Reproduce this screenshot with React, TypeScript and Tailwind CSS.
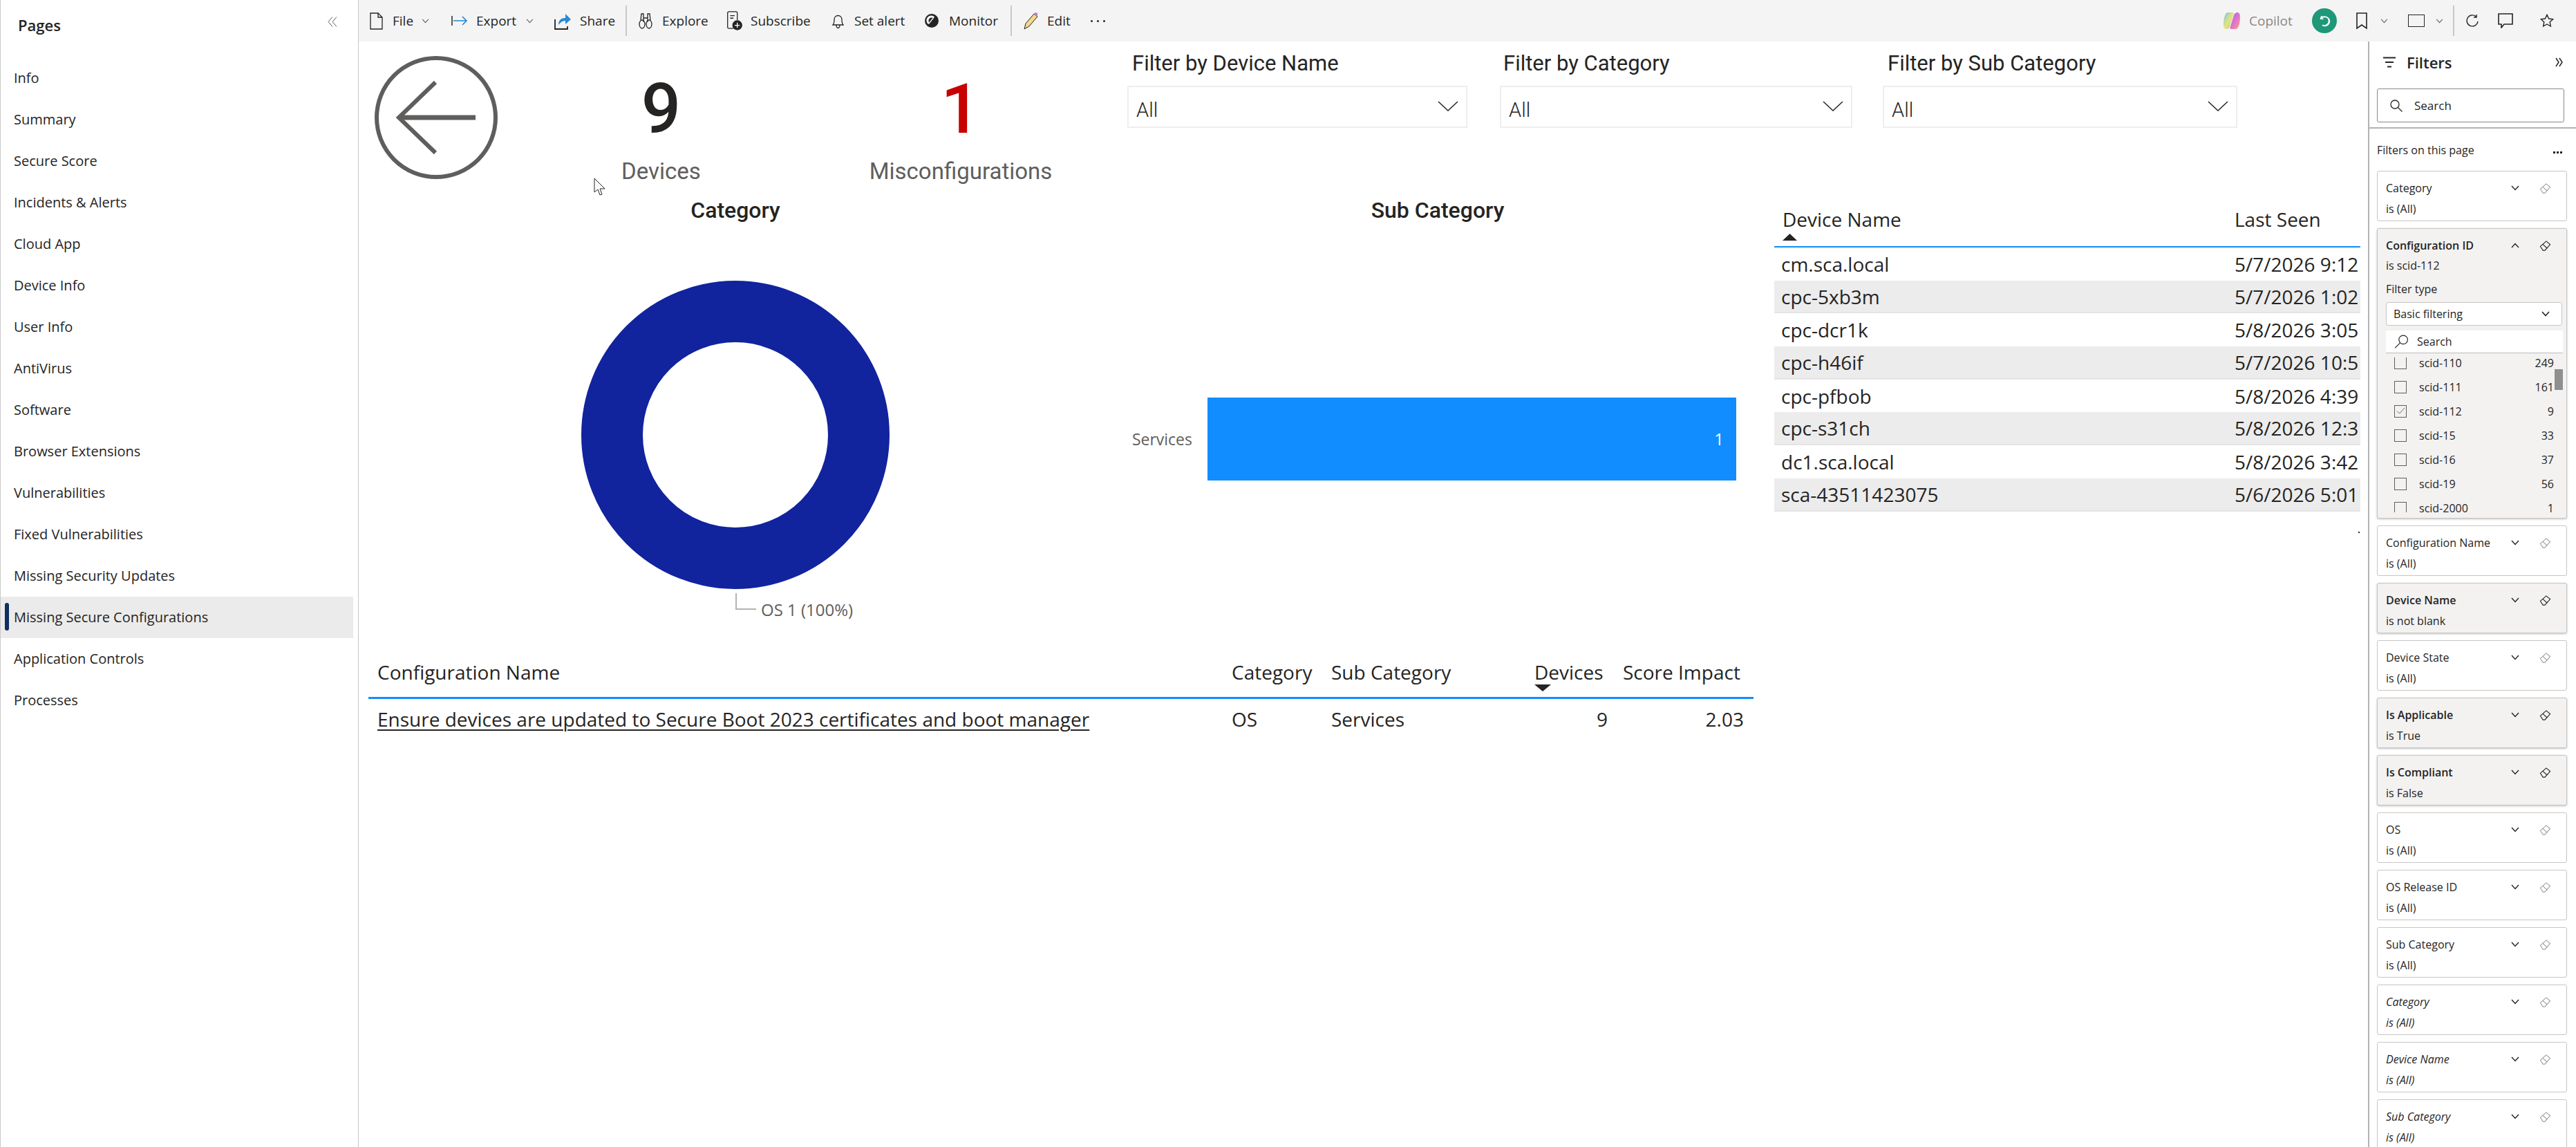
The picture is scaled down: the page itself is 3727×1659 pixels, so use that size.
import React from "react";

const pages = ["Info","Summary","Secure Score","Incidents & Alerts","Cloud App","Device Info","User Info","AntiVirus","Software","Browser Extensions","Vulnerabilities","Fixed Vulnerabilities","Missing Security Updates","Missing Secure Configurations","Application Controls","Processes"];

const Chev = ({ className = "", up = false, color = "#252423", w = 1.4 }: { className?: string; up?: boolean; color?: string; w?: number }) => (
  <svg viewBox="0 0 12 8" className={className} fill="none" stroke={color} strokeWidth={w}>
    <path d={up ? "M1 7l5-5.5L11 7" : "M1 1l5 5.5L11 1"} />
  </svg>
);

const Eraser = ({ color }: { color: string }) => (
  <svg viewBox="0 0 18 18" className="w-[17px] h-[17px]" fill="none" stroke={color} strokeWidth="1.2">
    <path d="M1.5 10L10.5 2l6 5-8 9H5.5z" />
    <path d="M5 6.5L12 13" />
  </svg>
);

function Card({ title, sub, variant = "normal" }: { title: string; sub: string; variant?: "normal" | "active" | "italic" }) {
  const active = variant === "active";
  return (
    <div className={active ? "h-[73px] mb-[10px] rounded-[3px] border border-[#c8c6c4] bg-[#f3f2f1] shadow-[0_1px_3px_rgba(0,0,0,0.25)] pl-[12px] pt-[11px] shrink-0" : "h-[73px] mb-[10px] rounded-[3px] border border-[#c8c6c4] bg-white pl-[12px] pt-[11px] shrink-0"}>
      <div className={variant === "italic" ? "flex items-center h-[26px] italic" : "flex items-center h-[26px]"}>
        <span className={active ? "w-[180px] text-[16px] font-semibold text-[#252423] whitespace-nowrap" : "w-[180px] text-[16px] text-[#252423] whitespace-nowrap"}>{title}</span>
        <Chev className="w-[12px] h-[8px] ml-[1px]" />
        <span className="ml-[29px]"><Eraser color={active ? "#252423" : "#a19f9d"} /></span>
      </div>
      <div className={variant === "italic" ? "h-[34px] leading-[34px] text-[16px] text-[#252423] italic" : "h-[34px] leading-[34px] text-[16px] text-[#252423]"}>{sub}</div>
    </div>
  );
}

const listRows: [string, string, boolean][] = [
  ["scid-110","249",false],["scid-111","161",false],["scid-112","9",true],["scid-15","33",false],["scid-16","37",false],["scid-19","56",false],["scid-2000","1",false],
];

const devices: [string, string][] = [
  ["cm.sca.local","5/7/2026 9:12"],["cpc-5xb3m","5/7/2026 1:02"],["cpc-dcr1k","5/8/2026 3:05"],["cpc-h46if","5/7/2026 10:5"],
  ["cpc-pfbob","5/8/2026 4:39"],["cpc-s31ch","5/8/2026 12:3"],["dc1.sca.local","5/8/2026 3:42"],["sca-43511423075","5/6/2026 5:01"],
];

function Slicer({ title, titleClass, boxClass }: { title: string; titleClass: string; boxClass: string }) {
  return (
    <div className={boxClass}>
      <div className={titleClass}>{title}</div>
      <div className="mt-[12px] h-[61px] border-2 border-[#eeeeee] flex items-center justify-between pl-[11px] pr-[11px] pt-[10px]">
        <span className="text-[29px] text-[#252423] font-['Roboto',sans-serif] font-light">All</span>
        <svg viewBox="0 0 30 15" className="w-[30px] h-[15px] -mt-[13px]" fill="none" stroke="#252423" strokeWidth="1.5"><path d="M1 1l14 13L29 1" /></svg>
      </div>
    </div>
  );
}

export default function App() {
  return (
    <div className="relative flex w-[3727px] h-[1659px] overflow-hidden bg-white font-['Open_Sans',sans-serif] text-[#252423]">
      {/* pages */}
      <aside className="w-[519px] shrink-0 h-full border-l border-l-[#c8c8c8] border-r border-r-[#c8c8c8]">
        <div className="h-[72px] flex items-center justify-between pl-[25px] pr-[30px]">
          <span className="text-[22px] font-semibold text-[#252423]">Pages</span>
          <svg viewBox="0 0 14 15" className="w-[14px] h-[15px] -mt-[10px]" fill="none" stroke="#605e5c" strokeWidth="1"><path d="M7 .5L1 7.5l6 7M13 .5L7 7.5l6 7" /></svg>
        </div>
        <nav className="mt-[11px]">
          {pages.map((p, i) => (
            <div key={p} className={i === 13 ? "relative h-[60px] w-[510px] bg-[#ebebeb] flex items-center pl-[19px] text-[20px] font-medium whitespace-nowrap" : "h-[60px] flex items-center pl-[19px] text-[20px] text-[#252423] whitespace-nowrap"}>
              {i === 13 && <span className="absolute left-[6px] top-[9px] w-[6px] h-[40px] rounded-[3px] bg-[#0f2f5f]" />}
              {p}
            </div>
          ))}
        </nav>
      </aside>

      <div className="flex-1 min-w-0 flex flex-col">
        {/* toolbar */}
        <header className="h-[60px] shrink-0 bg-[#f4f4f4] flex items-center text-[19px] text-[#252423] pl-[16px]">
          <div className="w-[118px] flex items-center">
            <svg viewBox="0 0 19 25" className="w-[19px] h-[25px]" fill="none" stroke="#252423" strokeWidth="1.3"><path d="M1 1h11l6 6v17H1zM12 1v6h6" /></svg>
            <span className="ml-[14px]">File</span>
            <Chev className="w-[11px] h-[7px] ml-[12px]" color="#605e5c" w={1.2} />
          </div>
          <div className="w-[149px] flex items-center">
            <svg viewBox="0 0 24 16" className="w-[24px] h-[16px]" fill="none" strokeWidth="1.5"><path d="M1 1v14" stroke="#252423" /><path d="M3 8h19M16 2l6 6-6 6" stroke="#1d86d0" /></svg>
            <span className="ml-[12px]">Export</span>
            <Chev className="w-[11px] h-[7px] ml-[14px]" color="#605e5c" w={1.2} />
          </div>
          <div className="w-[103px] flex items-center">
            <svg viewBox="0 0 24 26" className="w-[24px] h-[26px]" fill="none"><path d="M1 11v14h18v-4" stroke="#252423" strokeWidth="1.8" /><path d="M6 19c0-7 4-10 10-10V3l8 8-8 7v-5c-4 0-7 2-10 6z" fill="#2a8ad4" /></svg>
            <span className="ml-[13px]">Share</span>
          </div>
          <div className="w-[2px] h-[44px] bg-[#c8c8c8]" />
          <div className="w-[127px] ml-[17px] flex items-center">
            <svg viewBox="0 0 20 24" className="w-[20px] h-[24px]" fill="none" stroke="#252423" strokeWidth="1.3"><ellipse cx="5" cy="17" rx="4" ry="6" /><ellipse cx="15" cy="17" rx="4" ry="6" /><path d="M3 11l1-9h3v12M17 11l-1-9h-3v12M7 8h6" /></svg>
            <span className="ml-[14px]">Explore</span>
          </div>
          <div className="w-[153px] flex items-center">
            <svg viewBox="0 0 23 30" className="w-[23px] h-[28px]" fill="none" stroke="#252423" strokeWidth="1.4"><path d="M10 27H3a2 2 0 0 1-2-2V3a2 2 0 0 1 2-2h11a2 2 0 0 1 2 2v11M5 7h7M5 11h5" /><circle cx="16" cy="22" r="7" fill="#252423" /><path d="M16 18v8M12 22h8" stroke="#fff" /></svg>
            <span className="ml-[12px]">Subscribe</span>
          </div>
          <div className="w-[134px] flex items-center">
            <svg viewBox="0 0 17 24" className="w-[17px] h-[24px]" fill="none" stroke="#252423" strokeWidth="1.3"><path d="M1 18c2-2 2-4 2-8a5.500 5.500 0 0 1 11 0c0 4 0 6 2 8zM6 18c0 6 5 6 5 0" /></svg>
            <span className="ml-[15px]">Set alert</span>
          </div>
          <div className="w-[124px] flex items-center">
            <svg viewBox="0 0 20 20" className="w-[20px] h-[20px]" fill="#252423"><circle cx="10" cy="10" r="10" /><path d="M5 15A7 7 0 0 1 14 4L8 13z" fill="#f4f4f4" /><circle cx="10" cy="10" r="4.500" fill="#252423" /><path d="M6 14l7-9" stroke="#f4f4f4" strokeWidth="1.3" /></svg>
            <span className="ml-[15px]">Monitor</span>
          </div>
          <div className="w-[2px] h-[44px] bg-[#c8c8c8]" />
          <div className="w-[99px] ml-[15px] flex items-center">
            <svg viewBox="0 0 23 26" className="w-[23px] h-[26px]"><path d="M5 17L17 3l5 4-12 14-7 4z" fill="#f6d78a" stroke="#252423" strokeWidth="1" /><path d="M17 3l2-2 3 1 0 3-1 2z" fill="#c27ac7" /></svg>
            <span className="ml-[13px]">Edit</span>
          </div>
          <span className="flex gap-[6px]"><i className="w-[3px] h-[3px] bg-[#252423] rounded-full" /><i className="w-[3px] h-[3px] bg-[#252423] rounded-full" /><i className="w-[3px] h-[3px] bg-[#252423] rounded-full" /></span>

          <div className="ml-auto flex items-center">
            <svg viewBox="0 0 24 26" className="w-[24px] h-[26px]">
              <defs>
                <linearGradient id="cpa" x1="0" y1="0" x2="1" y2="1"><stop offset="0" stopColor="#6cc5f0" /><stop offset="0.5" stopColor="#e8e27a" /><stop offset="1" stopColor="#8fd89a" /></linearGradient>
                <linearGradient id="cpb" x1="0" y1="0" x2="1" y2="1"><stop offset="0" stopColor="#7a7af0" /><stop offset="0.5" stopColor="#e36fd0" /><stop offset="1" stopColor="#f6a77a" /></linearGradient>
              </defs>
              <path d="M6 1h7c2 0 2 2 1 4l-5 16c-1 3-3 4-5 4-3 0-4-3-4-7 0-7 2-17 6-17z" fill="url(#cpa)" />
              <path d="M18 25h-7c-2 0-2-2-1-4l5-16c1-3 3-4 5-4 3 0 4 3 4 7 0 7-2 17-6 17z" fill="url(#cpb)" />
            </svg>
            <span className="ml-[13px] text-[#8a8886] w-[67px]">Copilot</span>
            <span className="ml-[24px] w-[36px] h-[36px] rounded-full bg-[#1f9779] flex items-center justify-center">
              <svg viewBox="0 0 18 18" className="w-[18px] h-[18px]" fill="none" stroke="#fff" strokeWidth="1.6"><path d="M5 2l-1.500 4 4 .5M3.800 6A7 6.500 0 1 1 6 15.500 7 6.500 0 0 0 15.500 9c0-3.500-3-6-6.500-6-2 0-4 1-5.200 3z" /></svg>
            </span>
            <svg viewBox="0 0 16 25" className="ml-[28px] w-[16px] h-[25px]" fill="none" stroke="#252423" strokeWidth="1.6"><path d="M1 1h14v22l-7-5-7 5z" /></svg>
            <Chev className="ml-[19px] w-[11px] h-[7px]" color="#605e5c" w={1.2} />
            <span className="ml-[29px] w-[24px] h-[18px] border-[1.5px] border-[#252423]" />
            <Chev className="ml-[16px] w-[11px] h-[7px]" color="#605e5c" w={1.2} />
            <span className="ml-[14px] w-[2px] h-[44px] bg-[#c8c8c8]" />
            <svg viewBox="0 0 18 20" className="ml-[17px] w-[18px] h-[20px]" fill="none" stroke="#252423" strokeWidth="1.4"><path d="M15 4.500A8 8 0 1 0 17 11M15 1v4h-4" /></svg>
            <svg viewBox="0 0 22 22" className="ml-[28px] w-[22px] h-[22px]" fill="none" stroke="#252423" strokeWidth="1.6"><path d="M1 1h20v15H9l-4 5v-5H1z" /></svg>
            <svg viewBox="0 0 22 22" className="ml-[39px] mr-[32px] w-[20px] h-[20px]" fill="none" stroke="#252423" strokeWidth="1.5"><path d="M11 1.500l2.900 6.200 6.700.8-5 4.600 1.300 6.700L11 16.500l-5.900 3.300 1.300-6.700-5-4.600 6.700-.8z" /></svg>
          </div>
        </header>

        <div className="flex-1 min-h-0 flex">
          {/* canvas */}
          <main className="relative w-[2907px] shrink-0">
            <div className="h-[225px] flex">
              <svg viewBox="0 0 178 178" className="ml-[23px] mt-[21px] w-[178px] h-[178px] shrink-0" fill="none" stroke="#605e5c">
                <circle cx="89" cy="89" r="86" strokeWidth="6" />
                <path d="M88 38L35 89l53 51" strokeWidth="6" />
                <path d="M35 89h111" strokeWidth="7" />
              </svg>
              <div className="w-[473px] shrink-0 flex flex-col items-center pt-[38px] font-['Roboto',sans-serif]">
                <div className="text-[101px] leading-[120px] font-medium text-[#252423]">9</div>
                <div className="text-[33px] leading-[60px] text-[#605e5c]">Devices</div>
              </div>
              <div className="w-[394px] shrink-0 flex flex-col items-center pt-[38px] font-['Roboto',sans-serif]">
                <div className="text-[101px] leading-[120px] font-medium text-[#c80000]">1</div>
                <div className="text-[33px] leading-[60px] text-[#605e5c]">Misconfigurations</div>
              </div>
              <Slicer title="Filter by Device Name" boxClass="ml-[44px] w-[492px] pt-[12px]" titleClass="pl-[7px] h-[40px] leading-[40px] text-[31px] font-['Roboto',sans-serif]" />
              <Slicer title="Filter by Category" boxClass="ml-[47px] w-[510px] pt-[12px]" titleClass="pl-[5px] h-[40px] leading-[40px] text-[31px] font-['Roboto',sans-serif]" />
              <Slicer title="Filter by Sub Category" boxClass="ml-[44px] w-[513px] pt-[12px]" titleClass="pl-[7px] h-[40px] leading-[40px] text-[31px] font-['Roboto',sans-serif]" />
            </div>

            <div className="h-[655px] flex">
              <section className="w-[1090px] shrink-0">
                <h2 className="h-[38px] leading-[38px] text-center text-[32px] font-medium font-['Roboto',sans-serif]">Category</h2>
                <svg viewBox="0 0 448 448" className="ml-[321px] mt-[82px] w-[448px] h-[448px]" fill="none"><circle cx="224" cy="224" r="178.500" stroke="#12239e" strokeWidth="89" /></svg>
                <div className="ml-[545px] mt-[5px] flex">
                  <svg viewBox="0 0 30 25" className="w-[30px] h-[25px]" fill="none" stroke="#b3b3b3" strokeWidth="2"><path d="M1 0v23h29" /></svg>
                  <span className="ml-[7px] mt-[7px] text-[24px] leading-[34px] text-[#605e5c] whitespace-nowrap">OS 1 (100%)</span>
                </div>
              </section>
              <section className="w-[942px] shrink-0">
                <h2 className="h-[38px] leading-[38px] text-center text-[32px] font-medium font-['Roboto',sans-serif]">Sub Category</h2>
                <div className="mt-[252px] flex items-center">
                  <span className="w-[116px] text-right text-[23px] text-[#605e5c]">Services</span>
                  <div className="ml-[22px] w-[765px] h-[120px] bg-[#118dff] flex items-center justify-end pr-[18px] text-[24px] text-white">1</div>
                </div>
              </section>
              <section className="ml-[16px] w-[848px] shrink-0">
                <div className="relative h-[71px] grid grid-cols-[666px_182px] border-b-0 text-[28px]">
                  <div className="pl-[12px] pt-[12px] leading-[40px]">Device Name</div>
                  <div className="pt-[12px] leading-[40px]">Last Seen</div>
                  <svg viewBox="0 0 21 10" className="absolute left-[12px] top-[53px] w-[21px] h-[10px]" fill="#252423"><path d="M10.500 0L21 10H0z" /></svg>
                </div>
                <div className="h-[2px] bg-[#118dff]" />
                {devices.map(([d, t], i) => (
                  <div key={d} className={i % 2 ? "grid grid-cols-[666px_182px] h-[47.7px] items-center bg-[#ececec] border-b-2 border-[#e4e4e4] text-[28px]" : "grid grid-cols-[666px_182px] h-[47.7px] items-center text-[28px]"}>
                    <span className="pl-[10px] whitespace-nowrap">{d}</span>
                    <span className="whitespace-nowrap overflow-hidden">{t}</span>
                  </div>
                ))}
              </section>
            </div>

            <div className="ml-[14px] w-[2004px] text-[28px]">
              <div className="relative h-[68px] grid grid-cols-[1239px_144px_294px_128px_199px]">
                <div className="pl-[13px] pt-[12px] leading-[40px]">Configuration Name</div>
                <div className="pl-[10px] pt-[12px] leading-[40px]">Category</div>
                <div className="pl-[10px] pt-[12px] leading-[40px]">Sub Category</div>
                <div className="pl-[10px] pt-[12px] leading-[40px]">Devices</div>
                <div className="pl-[10px] pt-[12px] leading-[40px] whitespace-nowrap">Score Impact</div>
                <svg viewBox="0 0 24 10" className="absolute left-[1687px] top-[50px] w-[24px] h-[10px]" fill="#252423"><path d="M12 10L24 0H0z" /></svg>
              </div>
              <div className="h-[3px] bg-[#118dff]" />
              <div className="h-[58px] grid grid-cols-[1239px_144px_294px_128px_199px] items-center">
                <div className="pl-[13px] whitespace-nowrap underline decoration-2 underline-offset-[4px]">Ensure devices are updated to Secure Boot 2023 certificates and boot manager</div>
                <div className="pl-[10px]">OS</div>
                <div className="pl-[10px]">Services</div>
                <div className="pr-[12px] text-right">9</div>
                <div className="pr-[14px] text-right">2.03</div>
              </div>
            </div>
            <span className="absolute left-[2893px] top-[709px] w-[2px] h-[2px] bg-[#252423]" />
          </main>

          {/* filters */}
          <aside className="flex-1 min-w-0 border-l-2 border-l-[#b3b3b3] overflow-hidden flex flex-col">
            <div className="h-[60px] flex items-center pl-[20px] pr-[19px] shrink-0">
              <svg viewBox="0 0 18 16" className="w-[18px] h-[16px]" fill="none" stroke="#252423" strokeWidth="2"><path d="M0 1.500h18M3 8h12M6 14.500h6" /></svg>
              <span className="ml-[16px] text-[22px] font-semibold">Filters</span>
              <svg viewBox="0 0 11 14" className="ml-auto w-[11px] h-[14px]" fill="none" stroke="#252423" strokeWidth="1.5"><path d="M1 1l4 6-4 6M6 1l4 6-4 6" /></svg>
            </div>
            <div className="mt-[8px] mx-[11px] w-[271px] h-[49px] shrink-0 rounded-[3px] border border-[#8a8886] flex items-center pl-[18px]">
              <svg viewBox="0 0 18 18" className="w-[18px] h-[18px]" fill="none" stroke="#252423" strokeWidth="1.3"><circle cx="7" cy="7" r="6" /><path d="M11.500 11.500l6 6" /></svg>
              <span className="ml-[17px] text-[17px]">Search</span>
            </div>
            <div className="mt-[7px] h-[2px] shrink-0 bg-[#b3b3b3]" />
            <div className="h-[61px] shrink-0 flex items-center justify-between pl-[11px] pr-[20px] text-[16px]">
              <span>Filters on this page</span>
              <span className="flex gap-[2px] mt-[8px]"><i className="w-[3px] h-[3px] bg-[#252423]" /><i className="w-[3px] h-[3px] bg-[#252423]" /><i className="w-[3px] h-[3px] bg-[#252423]" /></span>
            </div>
            <div className="pl-[11px] w-[286px] flex flex-col">
              <Card title="Category" sub="is (All)" />
              <div className="relative h-[420px] mb-[10px] shrink-0 rounded-[3px] border border-[#c8c6c4] bg-[#f3f2f1] shadow-[0_1px_3px_rgba(0,0,0,0.25)] pl-[12px] pt-[11px]">
                <div className="flex items-center h-[26px]">
                  <span className="w-[180px] text-[16px] font-semibold whitespace-nowrap">Configuration ID</span>
                  <Chev up className="w-[12px] h-[8px] ml-[1px]" />
                  <span className="ml-[29px]"><Eraser color="#252423" /></span>
                </div>
                <div className="h-[32px] leading-[32px] text-[16px]">is scid-112</div>
                <div className="h-[37px] leading-[37px] text-[16px]">Filter type</div>
                <div className="w-[255px] h-[34px] rounded-[3px] border border-[#c8c6c4] bg-white flex items-center justify-between pl-[10px] pr-[16px] text-[16px]">
                  <span>Basic filtering</span>
                  <Chev className="w-[14px] h-[8px]" w={1.6} />
                </div>
                <div className="mt-[7px] w-[256px] h-[33px] bg-white border-b border-[#bcbcbc] flex items-center pl-[12px] text-[16px]">
                  <svg viewBox="0 0 20 20" className="w-[21px] h-[21px]" fill="none" stroke="#252423" strokeWidth="1.1"><circle cx="12.500" cy="7" r="6" /><path d="M8 11.500L1 18.500" /></svg>
                  <span className="ml-[12px]">Search</span>
                </div>
                <div className="relative mt-[6px] w-[256px] h-[224px] overflow-hidden">
                  <div className="-mt-[10px]">
                    {listRows.map(([n, c, on]) => (
                      <div key={n} className="h-[35px] flex items-center pl-[12px] pr-[13px] text-[16px]">
                        <span className="w-[18px] h-[18px] shrink-0 border border-[#605e5c] flex items-center justify-center">
                          {on && <svg viewBox="0 0 14 12" className="w-[13px] h-[11px]" fill="none" stroke="#605e5c" strokeWidth="1"><path d="M1 6l4 4 8-9" /></svg>}
                        </span>
                        <span className="ml-[18px]">{n}</span>
                        <span className="ml-auto">{c}</span>
                      </div>
                    ))}
                  </div>
                  <span className="absolute right-0 top-[17px] w-[12px] h-[30px] bg-[#8f8f8f]" />
                </div>
              </div>
              <Card title="Configuration Name" sub="is (All)" />
              <Card title="Device Name" sub="is not blank" variant="active" />
              <Card title="Device State" sub="is (All)" />
              <Card title="Is Applicable" sub="is True" variant="active" />
              <Card title="Is Compliant" sub="is False" variant="active" />
              <Card title="OS" sub="is (All)" />
              <Card title="OS Release ID" sub="is (All)" />
              <Card title="Sub Category" sub="is (All)" />
              <Card title="Category" sub="is (All)" variant="italic" />
              <Card title="Device Name" sub="is (All)" variant="italic" />
              <Card title="Sub Category" sub="is (All)" variant="italic" />
            </div>
          </aside>
        </div>
      </div>

      {/* mouse pointer */}
      <svg viewBox="0 0 18 27" className="absolute left-[859px] top-[257px] w-[18px] h-[27px]" fill="#fff" stroke="#252423" strokeWidth="1"><path d="M1 1v20l5-4 3 8 3-1-3-8h7z" /></svg>
    </div>
  );
}
